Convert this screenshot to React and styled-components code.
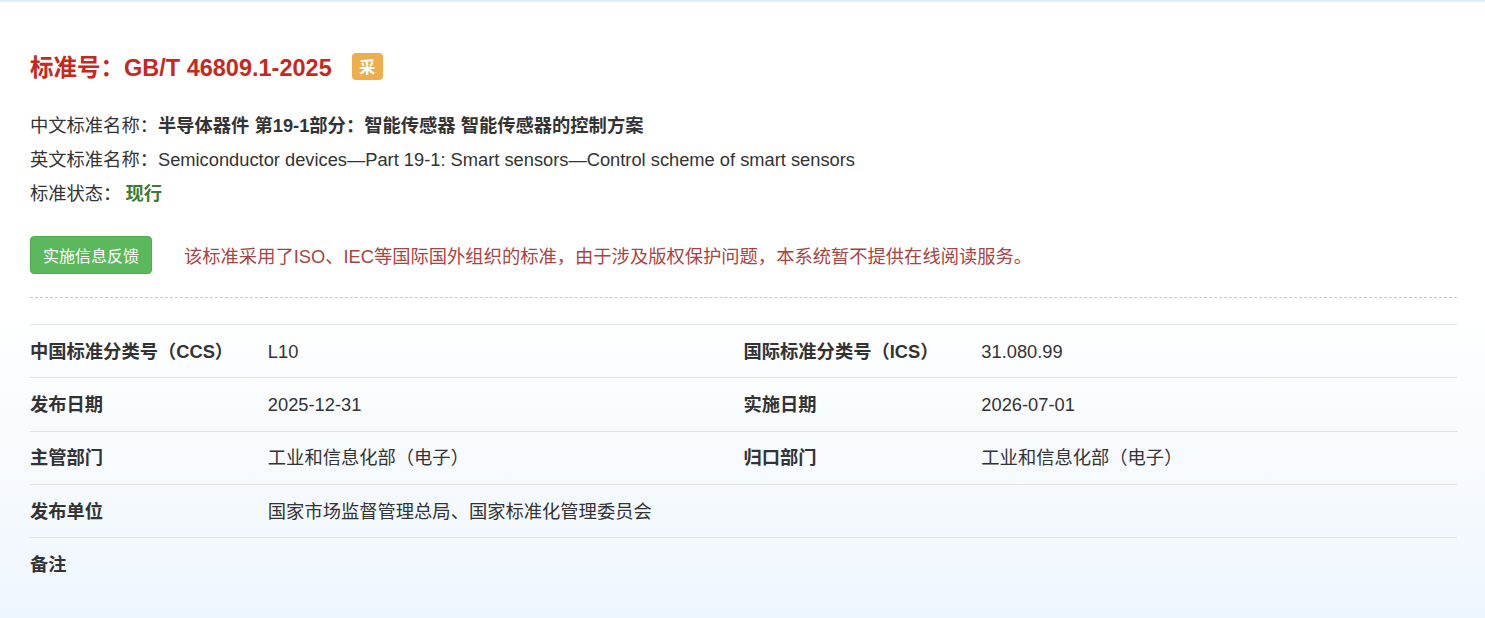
import styled, { createGlobalStyle } from "styled-components";

const GlobalStyle = createGlobalStyle`
  html, body {
    margin: 0;
    padding: 0;
  }
  body {
    font-family: "Liberation Sans", "Noto Sans CJK SC", sans-serif;
    color: #333;
    background: #fff;
  }
`;

const Page = styled.div`
  min-height: 618px;
  box-sizing: border-box;
  border-top: 2px solid #dff0fb;
  padding: 0 28px 0 30px;
  background: linear-gradient(to bottom, #ffffff 0px, #ffffff 300px, #eef6fd 618px);
`;

const Title = styled.h2`
  margin: 48px 0 0;
  display: flex;
  align-items: center;
  height: 32px;
  font-size: 23.5px;
  font-weight: bold;
  color: #c7281d;
`;

const Badge = styled.span`
  margin-left: 20px;
  width: 31px;
  height: 27px;
  border-radius: 4px;
  background: #f0ad4e;
  color: #fff;
  font-size: 16px;
  font-weight: bold;
  display: inline-flex;
  align-items: center;
  justify-content: center;
`;

const InfoList = styled.div`
  margin-top: 27px;
  display: flex;
  flex-direction: column;
`;

const InfoLine = styled.div`
  line-height: 34px;
  font-size: 18.3px;
  color: #333;
`;

const Strong = styled.span`
  font-weight: bold;
  color: ${(p) => p.color || "#333"};
  margin-left: ${(p) => p.gap || 0}px;
`;

const ActionRow = styled.div`
  margin-top: 25px;
  display: flex;
  align-items: center;
  gap: 32px;
`;

const Button = styled.button`
  height: 38px;
  padding: 0 12px;
  border: 1px solid #4cae4c;
  border-radius: 4px;
  background: #5cb85c;
  color: #fff;
  font-family: inherit;
  font-size: 16px;
  cursor: pointer;
`;

const Notice = styled.span`
  font-size: 18.3px;
  color: #a94442;
`;

const Dashed = styled.hr`
  margin: 23px 0 0;
  border: 0;
  border-top: 1px dashed #c8c8c8;
`;

const Table = styled.div`
  margin-top: 26px;
  display: grid;
  grid-template-columns: 1fr 2fr 1fr 2fr;
  grid-auto-rows: 53.3px;
`;

const Cell = styled.div`
  box-sizing: border-box;
  border-top: 1px solid #e2e2e2;
  display: flex;
  align-items: center;
  font-size: 18.3px;
  color: #333;
  font-weight: ${(p) => (p.$label ? "bold" : "normal")};
  padding: ${(p) => (p.$latin ? "1px 0 0" : "0 0 3px")};
`;

const rows = [
  ["中国标准分类号（CCS）", "L10", "国际标准分类号（ICS）", "31.080.99"],
  ["发布日期", "2025-12-31", "实施日期", "2026-07-01"],
  ["主管部门", "工业和信息化部（电子）", "归口部门", "工业和信息化部（电子）"],
  ["发布单位", "国家市场监督管理总局、国家标准化管理委员会", "", ""],
  ["备注", "", "", ""],
];

const isLatin = (s) => s !== "" && /^[\x00-\x7f]*$/.test(s);

export default function App() {
  return (
    <Page>
      <GlobalStyle />
      <Title>
        标准号：GB/T 46809.1-2025
        <Badge>采</Badge>
      </Title>
      <InfoList>
        <InfoLine>
          中文标准名称：<Strong>半导体器件 第19-1部分：智能传感器 智能传感器的控制方案</Strong>
        </InfoLine>
        <InfoLine>
          英文标准名称：Semiconductor devices—Part 19-1: Smart sensors—Control scheme of smart sensors
        </InfoLine>
        <InfoLine>
          标准状态：<Strong color="#3c7a2e" gap={4}>现行</Strong>
        </InfoLine>
      </InfoList>
      <ActionRow>
        <Button>实施信息反馈</Button>
        <Notice>
          该标准采用了ISO、IEC等国际国外组织的标准，由于涉及版权保护问题，本系统暂不提供在线阅读服务。
        </Notice>
      </ActionRow>
      <Dashed />
      <Table>
        {rows.map((r, i) =>
          r.map((c, j) => (
            <Cell key={`${i}-${j}`} $label={j % 2 === 0} $latin={isLatin(c)}>
              {c}
            </Cell>
          ))
        )}
      </Table>
    </Page>
  );
}
